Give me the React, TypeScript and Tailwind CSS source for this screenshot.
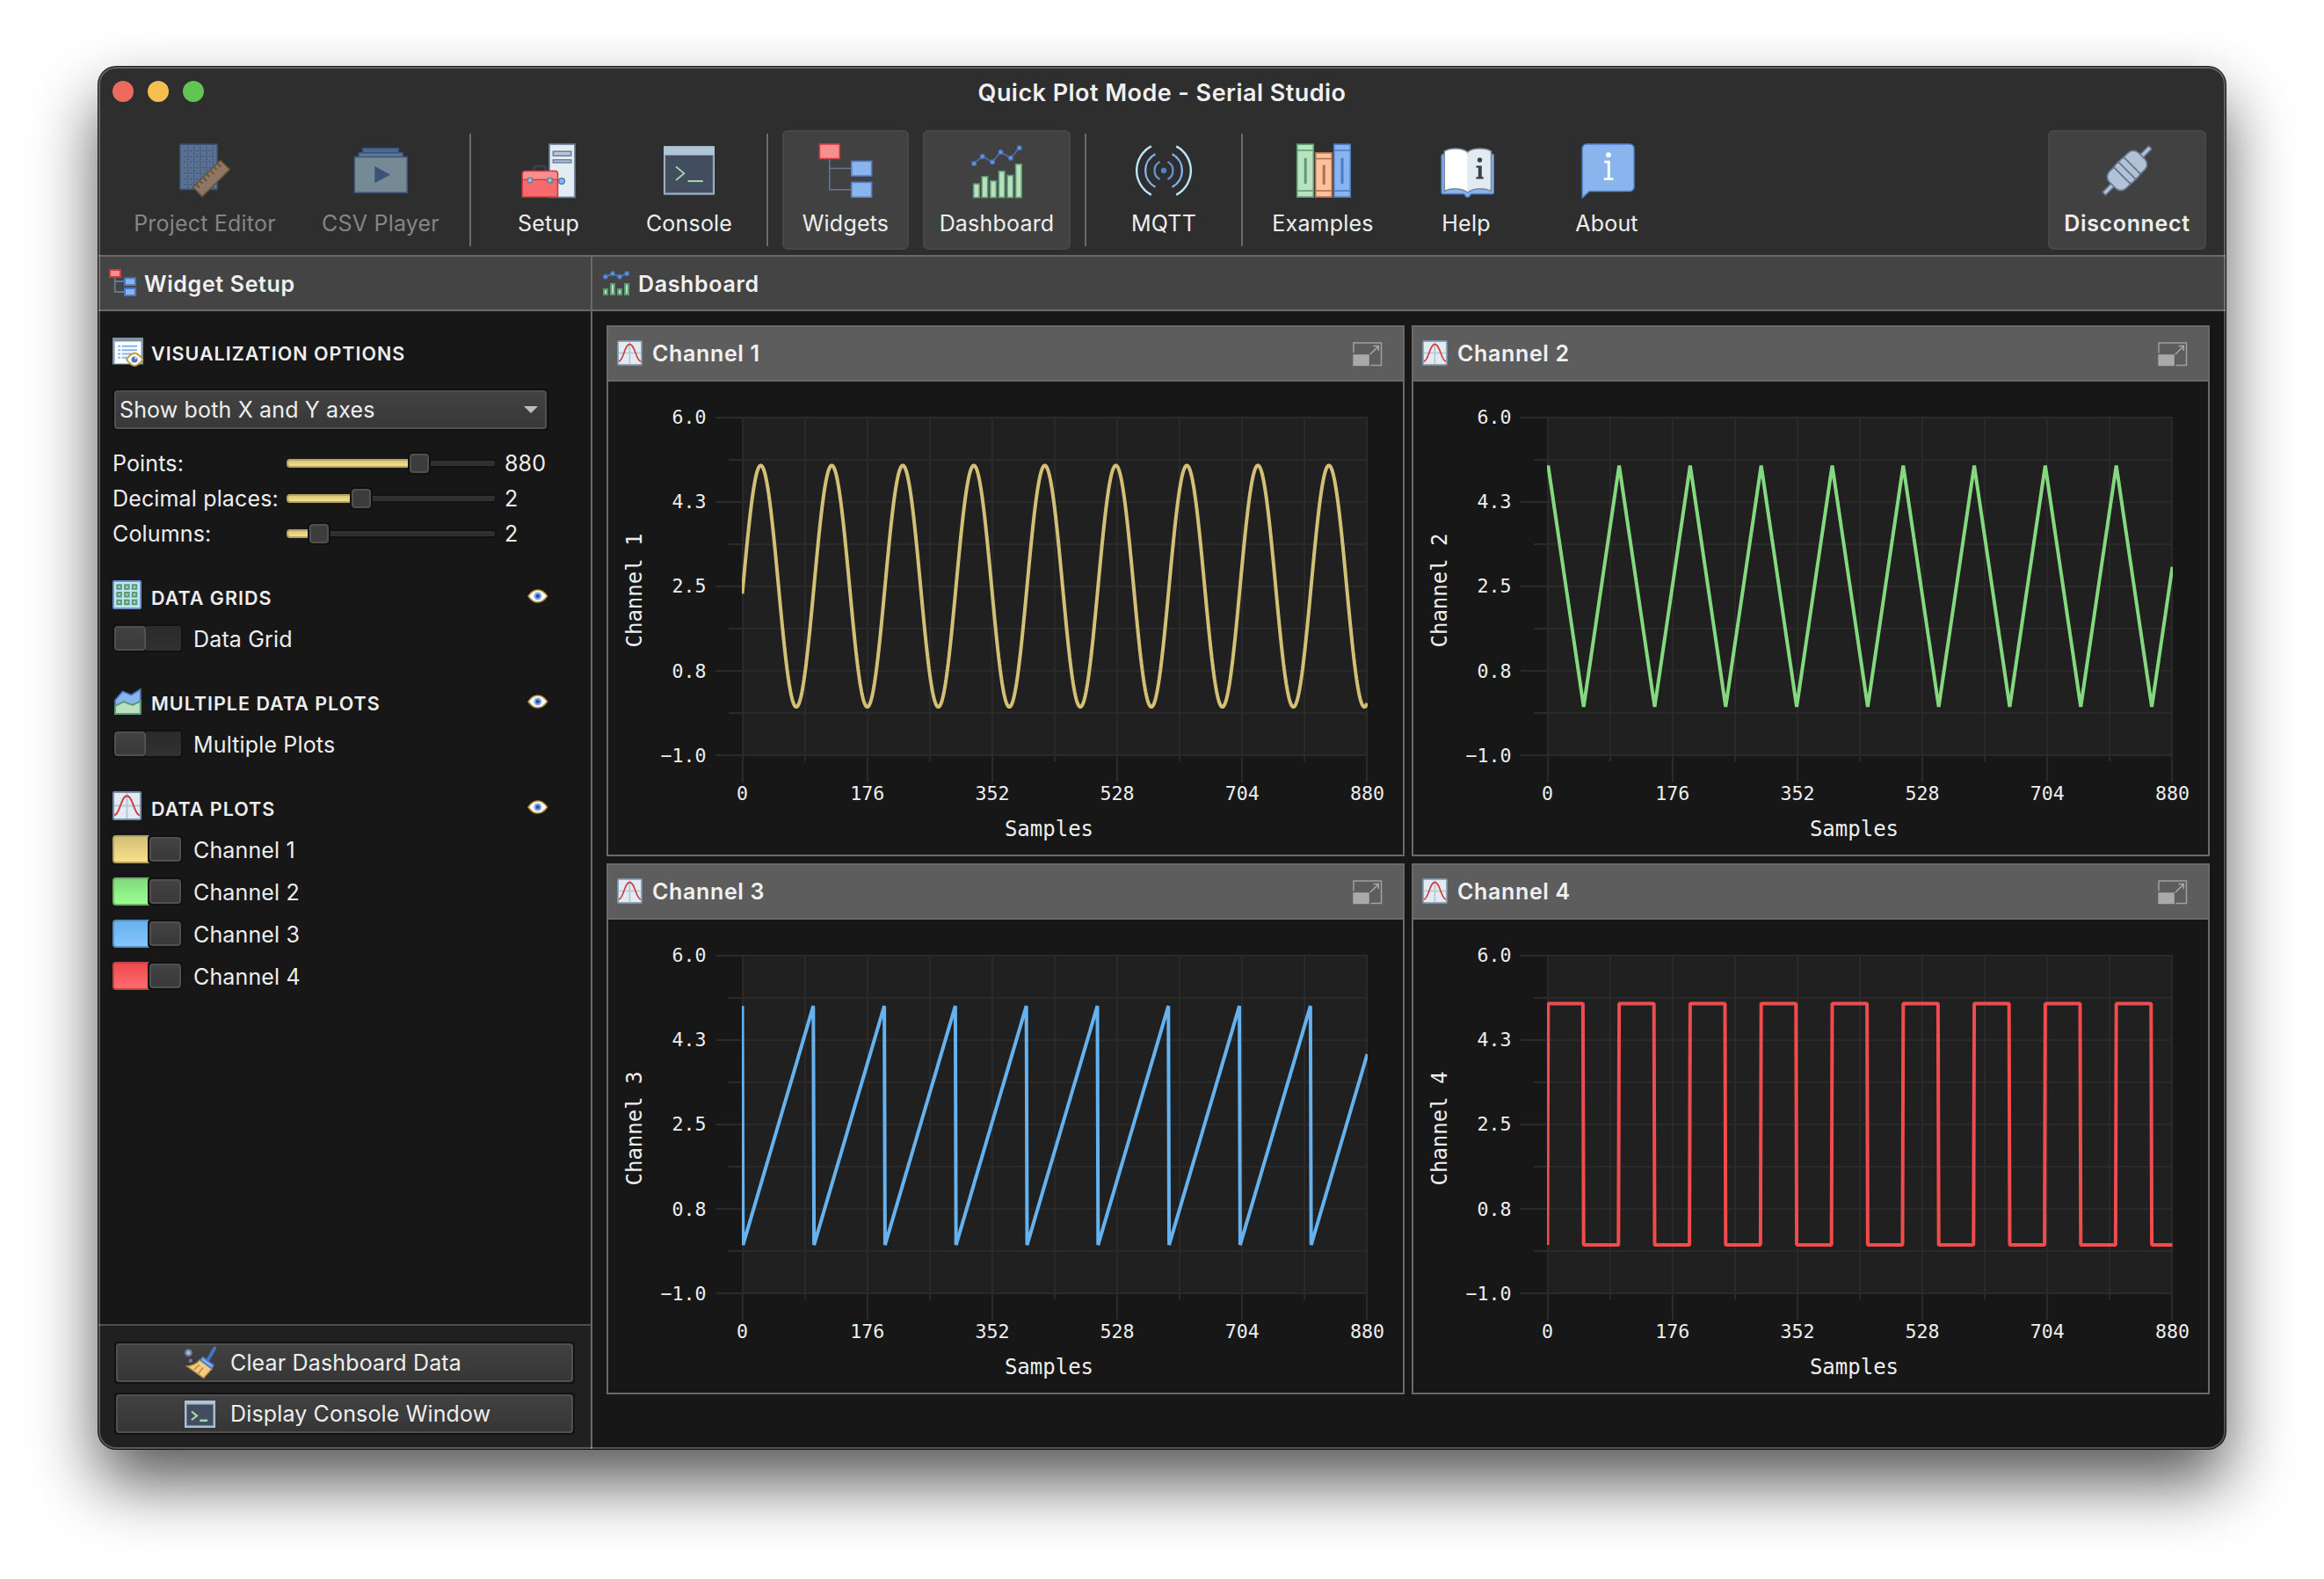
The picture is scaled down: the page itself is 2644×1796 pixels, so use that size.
import React from "react";

/* ---------- Toolbar icons (64 x 64) ---------- */

function Icon64({ children }: { children: React.ReactNode }) {
  return (
    <svg className="h-16 w-16 shrink-0" viewBox="0 0 64 64" fill="none">
      {children}
    </svg>
  );
}

function ProjectEditorIcon() {
  const cols = [8, 11.6, 15.2, 18.8, 22.4, 26, 29.6, 33.2, 36.8, 40.4];
  const rows = [5.5, 8.7, 11.9, 15.1, 18.3, 21.5, 24.7, 27.9, 31.1, 34.3, 37.5, 40.7, 43.9, 47.1, 50.3];
  return (
    <Icon64>
      <rect x="3.8" y="2.2" width="42.4" height="51.2" fill="#5a728f" stroke="#37517a" strokeWidth="1.6" />
      {rows.map((y, r) =>
        cols.map((x, c) =>
          r % 2 === 0 && c % 2 === 0 ? null : (
            <rect key={`${x}-${y}`} x={x} y={y} width="1.8" height="1.6" fill="#3e5782" />
          ),
        ),
      )}
      <path d="M49.7 20.3 60.4 30.7 29 61.6 18.6 50.8Z" fill="#8f7664" stroke="#62543b" strokeWidth="1.6" />
      <path
        d="M46.5 24 50.5 28M42.5 28l3 3M38.5 32l4 4M34.3 36l3 3M30.3 40l4 4M26.5 43.8l3 3M22.3 47.8l4 4"
        stroke="#5c4c33"
        strokeWidth="1.5"
      />
    </Icon64>
  );
}

function CsvPlayerIcon() {
  return (
    <Icon64>
      <rect x="11.7" y="6.6" width="40.6" height="6" fill="#4e6a8b" stroke="#37517a" strokeWidth="1.4" />
      <rect x="7" y="11.8" width="50.4" height="5" fill="#5f7896" stroke="#37517a" strokeWidth="1.4" />
      <rect x="2.3" y="16.5" width="60" height="40.6" fill="#768a95" stroke="#3c567c" strokeWidth="1.6" />
      <path d="M25.3 27 43 36.7 25.3 46.3Z" fill="#3b5377" />
    </Icon64>
  );
}

function SetupIcon() {
  return (
    <Icon64>
      <rect x="33" y="2" width="29" height="60.4" fill="#e2ecf2" stroke="#6c7f97" strokeWidth="1.7" />
      <rect x="37.3" y="10.2" width="20.4" height="5" fill="#b6c5da" stroke="#6c7f97" strokeWidth="1.5" />
      <rect x="37.3" y="19.8" width="20.4" height="3.2" fill="#b6c5da" stroke="#6c7f97" strokeWidth="1.5" />
      <circle cx="47" cy="44" r="3.4" fill="#86b2ec" stroke="#4a77bd" strokeWidth="1.3" />
      <path d="M15.6 32v-3.4a1.6 1.6 0 0 1 1.6-1.6h10a1.6 1.6 0 0 1 1.6 1.6V32" stroke="#36404e" strokeWidth="2.8" />
      <path d="M2.2 62V35.5a3 3 0 0 1 3-3h34.3a3 3 0 0 1 3 3V62Z" fill="#f66a6d" stroke="#c93a40" strokeWidth="1.6" />
      <path d="M3 41.8V35.8a2.4 2.4 0 0 1 2.4-2.4h33.9a2.4 2.4 0 0 1 2.4 2.4v6Z" fill="#f78f91" />
      <path d="M2.2 42.4h40.3" stroke="#c93a40" strokeWidth="1.3" />
      <rect x="8.6" y="40.6" width="4.8" height="5" fill="#b6c5da" stroke="#6c7f97" strokeWidth="1.5" />
      <rect x="31.2" y="40.6" width="4.8" height="5" fill="#b6c5da" stroke="#6c7f97" strokeWidth="1.5" />
    </Icon64>
  );
}

function ConsoleIcon() {
  return (
    <Icon64>
      <rect x="3" y="4" width="58" height="56" fill="#b0c5d8" />
      <path d="M3 4.6h58" stroke="#9fb6cc" strokeWidth="1.2" />
      <rect x="4.7" y="14.5" width="54.6" height="43" fill="#424e5d" stroke="#8398ae" strokeWidth="1" />
      <path d="M3 59.4h58" stroke="#66798e" strokeWidth="1.2" />
      <path d="M17 27.5 26.3 35.2 17 43" stroke="#a5d3ac" strokeWidth="1.8" />
      <path d="M30.5 44h17.3" stroke="#a5d3ac" strokeWidth="1.9" />
    </Icon64>
  );
}

function WidgetsIcon() {
  return (
    <Icon64>
      <path d="M13.8 19v34.7H38M13.8 29.5H38" stroke="#66788f" strokeWidth="1.5" />
      <rect x="2.4" y="1.9" width="22.8" height="16.6" fill="#f78f91" stroke="#cb3b42" strokeWidth="1.6" />
      <rect x="38.8" y="21.4" width="22.8" height="16.6" fill="#8ab4ee" stroke="#4f80c9" strokeWidth="1.6" />
      <rect x="38.8" y="45.4" width="22.8" height="16.8" fill="#8ab4ee" stroke="#4f80c9" strokeWidth="1.6" />
    </Icon64>
  );
}

function DashboardIcon() {
  const bars = [
    [4.8, 46.3],
    [14.3, 38],
    [24, 43],
    [33.6, 32],
    [43.2, 36.7],
    [52.8, 24],
  ];
  const pts = [
    [6.1, 24],
    [15.7, 16],
    [27, 22.3],
    [36.5, 11],
    [47.8, 17.7],
    [57.7, 6.3],
  ];
  return (
    <Icon64>
      {bars.map(([x, y]) => (
        <rect key={x} x={x + 0.8} y={y + 0.8} width="6.6" height={61.9 - y} fill="#b7e0bd" stroke="#5b9a74" strokeWidth="1.6" />
      ))}
      <polyline points={pts.map((p) => p.join(",")).join(" ")} stroke="#4a74b6" strokeWidth="1.5" />
      {pts.map(([x, y]) => (
        <circle key={x} cx={x} cy={y} r="2.3" fill="#6c9ae0" stroke="#4a77c0" strokeWidth="1.4" />
      ))}
    </Icon64>
  );
}

function MqttIcon() {
  return (
    <Icon64>
      <circle cx="32" cy="32" r="3.2" fill="#4f7fc8" />
      <path d="M27.6 22A11.3 11.3 0 0 0 27.6 42M36.4 22A11.3 11.3 0 0 1 36.4 42" stroke="#6690c9" strokeWidth="2.4" />
      <path d="M22.4 13.2A21.3 21.3 0 0 0 22.4 50.8M41.6 13.2A21.3 21.3 0 0 1 41.6 50.8" stroke="#85b1ee" strokeWidth="2.4" />
      <path d="M17.8 4.4A31.2 31.2 0 0 0 17.8 59.6M46.2 4.4A31.2 31.2 0 0 1 46.2 59.6" stroke="#bde6fb" strokeWidth="2.4" />
    </Icon64>
  );
}

function ExamplesIcon() {
  return (
    <Icon64>
      <rect x="2.7" y="2.1" width="18.6" height="60" fill="#b9e2bf" stroke="#5b9c76" strokeWidth="1.6" />
      <path d="M2.7 9h18.6M2.7 55h18.6" stroke="#5b9c76" strokeWidth="1.5" />
      <path d="M12.2 17.7V47" stroke="#5b9c76" strokeWidth="3" />
      <rect x="23.7" y="11.8" width="18.6" height="50.3" fill="#fdc19c" stroke="#a9704f" strokeWidth="1.6" />
      <path d="M23.7 18.4h18.6M23.7 55h18.6" stroke="#a9704f" strokeWidth="1.5" />
      <path d="M33.2 25.7V48" stroke="#a9704f" strokeWidth="3" />
      <rect x="44.7" y="2.1" width="18.6" height="60" fill="#8ab4ee" stroke="#4a7bc4" strokeWidth="1.6" />
      <path d="M44.7 9h18.6M44.7 55h18.6" stroke="#4a7bc4" strokeWidth="1.5" />
      <path d="M54 17.7V47" stroke="#4a7bc4" strokeWidth="3" />
    </Icon64>
  );
}

function HelpIcon() {
  return (
    <Icon64>
      <path
        d="M6 13.5h55.6a2 2 0 0 1 2 2v41a2 2 0 0 1-2 2H38c-.8 0-1.2.7-1.6 1.8-.8 2.6-4.8 2.6-5.6 0-.4-1.1-.8-1.8-1.6-1.8H6a2 2 0 0 1-2-2v-41a2 2 0 0 1 2-2Z"
        fill="#8ab4ee"
        stroke="#4f80c9"
        strokeWidth="1.4"
      />
      <path d="M33.8 11C28 6 14 5.5 7.3 10v45.5C14 51.5 27 51.5 33.8 57Z" fill="#ffffff" />
      <path d="M33.8 11C39 6 54 5.5 60.5 10v45.5C54 51.5 40 51.5 33.8 57Z" fill="#e1ebf1" />
      <path
        d="M33.8 11C28 6 14 5.5 7.3 10v45.5C14 51.5 27 51.5 33.8 57 40 51.5 54 51.5 60.5 55.5V10C54 5.5 39 6 33.8 11Z"
        stroke="#76889b"
        strokeWidth="1.5"
      />
      <circle cx="47.5" cy="20" r="2.7" fill="#37404c" />
      <path d="M43.5 26.5h6.3v12.8h2v2.3h-8.4v-2.3h2.4V28.8h-2.3Z" fill="#37404c" />
    </Icon64>
  );
}

function AboutIcon() {
  return (
    <Icon64>
      <path
        d="M9.2 2H58a5 5 0 0 1 5 5v43.5a5 5 0 0 1-5 5H12.3L4.2 62.8V7a5 5 0 0 1 5-5Z"
        fill="#8ab4ee"
        stroke="#5585cd"
        strokeWidth="1.5"
      />
      <circle cx="34" cy="14.2" r="2.9" fill="#ffffff" />
      <path d="M29.2 20.8h6.6v19.4h3.6v2.8H28.8v-2.8h4V23.4h-3.6Z" fill="#ffffff" />
    </Icon64>
  );
}

function DisconnectIcon() {
  return (
    <Icon64>
      <g transform="translate(32 32) rotate(-45)" stroke="#66788f" strokeWidth="1.6" fill="#b1c1d6">
        <rect x="-37" y="-2.4" width="18" height="4.8" />
        <rect x="19" y="-2.4" width="18" height="4.8" />
        <path d="M-8 -13.5H-15a8.5 8.5 0 0 0-8.5 8.5V5a8.5 8.5 0 0 0 8.5 8.5H-8Z" />
        <path d="M8 -13.5H15a8.5 8.5 0 0 1 8.5 8.5V5a8.5 8.5 0 0 1-8.5 8.5H8Z" />
        <path d="M0-14H-5a3 3 0 0 0-3 3V11a3 3 0 0 0 3 3H0Z" />
        <path d="M0-14H5a3 3 0 0 1 3 3V11a3 3 0 0 1-3 3H0Z" />
      </g>
    </Icon64>
  );
}

/* ---------- Small icons ---------- */

function WidgetsSmallIcon() {
  return (
    <svg className="h-8 w-8 shrink-0" viewBox="0 0 32 32" fill="none">
      <path d="M6.7 9.5V26H17M6.7 14H17" stroke="#66788f" strokeWidth="1.8" />
      <rect x="1" y="1" width="12" height="8" fill="#f78f91" stroke="#cb3b42" strokeWidth="2" />
      <rect x="18" y="10.3" width="12" height="8" fill="#8ab4ee" stroke="#4a77c0" strokeWidth="2" />
      <rect x="18" y="22" width="12" height="8" fill="#8ab4ee" stroke="#4a77c0" strokeWidth="2" />
    </svg>
  );
}

function DashboardSmallIcon() {
  const pts = [
    [2.9, 8.8],
    [11, 5.2],
    [19, 8.8],
    [27.2, 5.2],
  ];
  return (
    <svg className="h-8 w-8 shrink-0" viewBox="0 0 32 32" fill="none">
      {[
        [1, 23],
        [9, 17],
        [17, 23],
        [25, 17],
      ].map(([x, y]) => (
        <rect key={x} x={x} y={y} width="4" height={29 - y} fill="#b7e0bd" stroke="#5b9a74" strokeWidth="2" />
      ))}
      <polyline points={pts.map((p) => p.join(",")).join(" ")} stroke="#4a77c0" strokeWidth="1.8" />
      {pts.map(([x, y]) => (
        <circle key={x} cx={x} cy={y} r="2" fill="#8ab4ee" stroke="#4a77c0" strokeWidth="2" />
      ))}
    </svg>
  );
}

function OptionsIcon() {
  return (
    <svg className="h-[33px] w-9 shrink-0" viewBox="0 0 36 33" fill="none">
      <rect x="0" y="0" width="35" height="30.5" fill="#7f93a6" />
      <rect x="2.5" y="4.5" width="30" height="25" fill="#ffffff" />
      <path d="M10.6 9.8H28M10.6 14.2H28M10.6 18.6H22M10.6 22.8H19" stroke="#86b2ee" strokeWidth="2" />
      <path d="M6.2 9.8H9M6.2 14.2H9M6.2 18.6H9M6.2 22.8H9" stroke="#86b2ee" strokeWidth="2" />
      <path
        d="M16 25C19 20.5 22 17.8 25 17.8s6.5 3 9.5 7.2C31.5 29 28 32 25 32s-6-3-9-7Z"
        fill="#ffffff"
        stroke="#bc9a3f"
        strokeWidth="1.9"
      />
      <circle cx="25" cy="25" r="3.5" fill="#4a74bb" />
      <circle cx="26.4" cy="23.4" r="1.1" fill="#ffffff" />
    </svg>
  );
}

function GridIcon() {
  return (
    <svg className="h-[33px] w-[33px] shrink-0" viewBox="0 0 33 33" fill="none">
      <rect x="1" y="1" width="31" height="31" rx="1" fill="#c0e6f8" stroke="#6c93cc" strokeWidth="2" />
      {[7.6, 16.3, 25].map((x) =>
        [7.6, 16.3, 25].map((y) => (
          <rect key={`${x}-${y}`} x={x - 2.2} y={y - 2.2} width="4.4" height="4.4" fill="#b9e2bf" stroke="#5b9c76" strokeWidth="2.2" />
        )),
      )}
    </svg>
  );
}

function MultiPlotIcon() {
  return (
    <svg className="h-[33px] w-[33px] shrink-0" viewBox="0 0 33 33" fill="none">
      <path d="M3 30V16.5L11.5 6.5l9.8 4L31.8 4V30Z" fill="#8ab4ee" stroke="#4a77bd" strokeWidth="1.8" />
      <path d="M3 32V23l9.5-5 10.5 4 8.8-4.5V32Z" fill="#b9e2bf" stroke="#5b9c76" strokeWidth="2" />
    </svg>
  );
}

function PlotIcon({ className }: { className: string }) {
  return (
    <svg className={className} viewBox="0 0 33 33" fill="none" preserveAspectRatio="none">
      <rect x="1" y="1" width="31" height="31" rx="1" fill="#e1ebf1" stroke="#7890a5" strokeWidth="2" />
      <path d="M16.4 2V31M2 16.5H31" stroke="#b4c8d4" strokeWidth="1.9" />
      <path d="M2.3 27.5C9 25 9.5 5.3 16.4 5.3S24 25 30.7 27.5" stroke="#cf3d41" strokeWidth="1.9" />
    </svg>
  );
}

function EyeIcon() {
  return (
    <svg className="mt-0.5 h-4 w-6 shrink-0" viewBox="0 0 24 16" fill="none">
      <path
        d="M1 8C4 3.5 7.5 1 11.8 1S19.5 3.5 22.6 8C19.5 12.5 16 15 11.8 15S4 12.5 1 8Z"
        fill="#ffffff"
        stroke="#b3923f"
        strokeWidth="1.5"
      />
      <circle cx="11.8" cy="8" r="3.8" fill="#6d9ce4" stroke="#86aef0" strokeWidth="1.4" />
      <circle cx="11.8" cy="8" r="2" fill="#2f4d86" />
    </svg>
  );
}

function BroomIcon() {
  return (
    <svg className="h-[38px] w-9 shrink-0" viewBox="0 0 36 38" fill="none">
      <circle cx="4.4" cy="7.7" r="3.3" fill="#a9bdd6" stroke="#667f9f" strokeWidth="2.2" />
      <circle cx="6.9" cy="16.7" r="2.2" fill="#667f9f" />
      <path d="M2.6 23C9 22.5 14 20 17.5 15.5L31 26C27.5 30 24 33.5 21.7 36.5Z" fill="#f3cb7e" stroke="#b08a3c" strokeWidth="1.4" />
      <path d="M10.5 27 17 21.5M15.5 31.5 21 24.5" stroke="#b08a3c" strokeWidth="1.3" />
      <path d="M27 15 34.3 2.5" stroke="#4674bd" strokeWidth="4" strokeLinecap="round" />
      <path d="M20.5 12.5 33 21.8 31 25.5 18 16Z" fill="#8ab4ee" stroke="#4a77c0" strokeWidth="1.7" strokeLinejoin="round" />
    </svg>
  );
}

function ConsoleSmallIcon() {
  return (
    <svg className="h-[31px] w-9 shrink-0" viewBox="0 0 36 31" fill="none">
      <rect x="0" y="0" width="35" height="31" fill="#b0c5d8" />
      <rect x="2.2" y="4.3" width="30.6" height="24.4" fill="#424e5d" stroke="#7f95ab" strokeWidth="0.9" />
      <path d="M8 12.5 14 17.3 8 22" stroke="#a5d9ac" strokeWidth="2.2" />
      <path d="M17.3 22.8h8.7" stroke="#a5d9ac" strokeWidth="2.4" />
    </svg>
  );
}

function ExpandIcon() {
  return (
    <svg className="mt-0.5 h-7 w-[34px] shrink-0" viewBox="0 0 34 28" fill="none">
      <path d="M1 12.5V1H32.5V26.5H20.5" stroke="#a0a0a0" strokeWidth="1.5" />
      <rect x="0.3" y="14.2" width="18.5" height="13" fill="#a9a9a9" />
      <path d="M19.8 14 28.8 5.2M23.5 4.5H29.3V10" stroke="#a9a9a9" strokeWidth="1.5" />
    </svg>
  );
}

/* ---------- Toolbar ---------- */

function ToolButton({
  icon,
  label,
  width = "w-36",
  active = false,
  disabled = false,
  bold = false,
}: {
  icon: React.ReactNode;
  label: string;
  width?: string;
  active?: boolean;
  disabled?: boolean;
  bold?: boolean;
}) {
  return (
    <div
      className={`flex h-[136px] shrink-0 flex-col items-center rounded-md border-2 pt-3 ${width} ${
        active ? "border-[#474747] bg-[#414141]" : "border-transparent"
      }`}
    >
      {icon}
      <span
        className={`mt-3 whitespace-nowrap text-[25px] leading-8 ${
          bold ? "font-semibold tracking-[0.65px]" : "tracking-[0.2px]"
        } ${disabled ? "text-[#858585]" : "text-[#eeeeee]"}`}
      >
        {label}
      </span>
    </div>
  );
}

function ToolSeparator() {
  return <div className="h-32 w-0.5 shrink-0 bg-[#6a6a6a]" />;
}

function Toolbar() {
  return (
    <div className="flex h-[154px] items-center gap-4 border-b-2 border-[#6a6a6a] px-[22px] pt-1">
      <ToolButton icon={<ProjectEditorIcon />} label="Project Editor" width="w-[198px]" disabled />
      <ToolButton icon={<CsvPlayerIcon />} label="CSV Player" width="w-[170px]" disabled />
      <ToolSeparator />
      <ToolButton icon={<SetupIcon />} label="Setup" />
      <ToolButton icon={<ConsoleIcon />} label="Console" />
      <ToolSeparator />
      <ToolButton icon={<WidgetsIcon />} label="Widgets" active />
      <ToolButton icon={<DashboardIcon />} label="Dashboard" width="w-[168px]" active />
      <ToolSeparator />
      <ToolButton icon={<MqttIcon />} label="MQTT" />
      <ToolSeparator />
      <ToolButton icon={<ExamplesIcon />} label="Examples" width="w-[150px]" />
      <ToolButton icon={<HelpIcon />} label="Help" />
      <ToolButton icon={<AboutIcon />} label="About" />
      <div className="grow" />
      <ToolButton icon={<DisconnectIcon />} label="Disconnect" width="w-[180px]" active bold />
    </div>
  );
}

/* ---------- Sidebar ---------- */

function PaneHeader({ icon, title }: { icon: React.ReactNode; title: string }) {
  return (
    <div className="flex h-[62px] shrink-0 items-center gap-2 border-b-2 border-[#6a6a6a] bg-[#444444] pl-3">
      {icon}
      <span className="pt-px text-[25px] font-semibold leading-8 tracking-[0.65px] text-[#f0f0f0]">{title}</span>
    </div>
  );
}

function SliderRow({ label, value, fill }: { label: string; value: string; fill: number }) {
  return (
    <div className="flex h-10 items-center">
      <span className="w-[198px] shrink-0 whitespace-nowrap">{label}</span>
      <div className="relative flex h-10 w-[239px] items-center">
        <div className="h-2.5 w-full rounded border-2 border-[#121212] bg-[#303030]" />
        <div
          className="absolute left-0 h-2.5 rounded-l border-2 border-r-0 border-[#b3a464] bg-gradient-to-b from-[#d9c77b] to-[#f6e08a]"
          style={{ width: fill }}
        />
        <div className="absolute h-[26px] w-[26px] rounded border-2 border-[#111111] bg-[#111111]" style={{ left: fill }}>
          <div className="h-[22px] w-[22px] rounded-sm border-2 border-[#505050] bg-[#3c3c3c]" />
        </div>
      </div>
      <span className="ml-[9px]">{value}</span>
    </div>
  );
}

function GroupHeader({ icon, title, eye = true }: { icon: React.ReactNode; title: string; eye?: boolean }) {
  return (
    <div className="flex h-[33px] items-center">
      <div className="flex w-11 shrink-0">{icon}</div>
      <span className={`grow text-[21.5px] font-semibold leading-7 tracking-[1px] ${eye ? "pt-1.5" : "pt-0.5"}`}>{title}</span>
      {eye && <EyeIcon />}
    </div>
  );
}

function Knob() {
  return (
    <div className="h-8 w-10 shrink-0 rounded border-2 border-[#111111] bg-[#111111]">
      <div className="h-7 w-9 rounded-sm border-2 border-[#505050] bg-gradient-to-b from-[#424242] to-[#393939]" />
    </div>
  );
}

function SwitchRow({ label, on }: { label: string; on?: string }) {
  return (
    <div className="flex h-12 items-center">
      {on ? (
        <div className="flex w-20 shrink-0">
          <div className={`-mr-0.5 h-8 w-[42px] rounded-l border-2 border-r-0 ${on}`} />
          <Knob />
        </div>
      ) : (
        <div className="flex w-20 shrink-0">
          <Knob />
          <div className="-ml-0.5 h-8 w-[42px] rounded-r border-2 border-l-0 border-[#111111] bg-gradient-to-b from-[#2a2a2a] to-[#313131]" />
        </div>
      )}
      <span className="ml-3 pt-px">{label}</span>
    </div>
  );
}

function PushButton({ icon, label }: { icon: React.ReactNode; label: string }) {
  return (
    <div className="rounded border-2 border-[#121212]">
      <div className="flex h-11 items-center rounded-sm border-2 border-[#505050] bg-gradient-to-b from-[#414141] to-[#363636] pl-[76px]">
        <div className="flex w-[52px] shrink-0">{icon}</div>
        <span className="whitespace-nowrap">{label}</span>
      </div>
    </div>
  );
}

function Sidebar() {
  return (
    <div className="flex w-[562px] shrink-0 flex-col border-r-2 border-[#6a6a6a] text-[25px] leading-8 tracking-[0.15px] text-[#eeeeee]">
      <PaneHeader icon={<WidgetsSmallIcon />} title="Widget Setup" />
      <div className="flex grow flex-col pl-4 pr-12 pt-[30px]">
        <GroupHeader icon={<OptionsIcon />} title="VISUALIZATION OPTIONS" eye={false} />
        <div className="mt-[25px] rounded border-2 border-[#101010]">
          <div className="flex h-11 items-center justify-between rounded-sm border-2 border-[#505050] bg-gradient-to-b from-[#424242] to-[#383838] pl-1 pr-2">
            <span>Show both X and Y axes</span>
            <svg className="h-2 w-4" viewBox="0 0 16 8">
              <path d="M0 0H16L8 8Z" fill="#bdbdbd" />
            </svg>
          </div>
        </div>
        <div className="mt-[17px]">
          <SliderRow label="Points:" value="880" fill={138} />
          <SliderRow label="Decimal places:" value="2" fill={72} />
          <SliderRow label="Columns:" value="2" fill={24} />
        </div>
        <div className="mt-[33px] flex flex-col gap-[9px]">
          <GroupHeader icon={<GridIcon />} title="DATA GRIDS" />
          <SwitchRow label="Data Grid" />
        </div>
        <div className="mt-[30px] flex flex-col gap-[9px]">
          <GroupHeader icon={<MultiPlotIcon />} title="MULTIPLE DATA PLOTS" />
          <SwitchRow label="Multiple Plots" />
        </div>
        <div className="mt-[30px] flex flex-col gap-[9px]">
          <GroupHeader icon={<PlotIcon className="h-[33px] w-[33px]" />} title="DATA PLOTS" />
          <div>
            <SwitchRow label="Channel 1" on="border-[#b3a464] bg-gradient-to-b from-[#d3c076] to-[#f8e08a]" />
            <SwitchRow label="Channel 2" on="border-[#6cb267] bg-gradient-to-b from-[#82da7c] to-[#9bff92]" />
            <SwitchRow label="Channel 3" on="border-[#5490c4] bg-gradient-to-b from-[#66b1ee] to-[#85c6ff]" />
            <SwitchRow label="Channel 4" on="border-[#c44448] bg-gradient-to-b from-[#ee4a4c] to-[#ff6c6e]" />
          </div>
        </div>
      </div>
      <div className="flex h-[142px] flex-col gap-2.5 border-t-2 border-[#4c4c4c] bg-[#202020] px-[18px] pt-[18px]">
        <PushButton icon={<BroomIcon />} label="Clear Dashboard Data" />
        <PushButton icon={<ConsoleSmallIcon />} label="Display Console Window" />
      </div>
    </div>
  );
}

/* ---------- Plots ---------- */

const SAMPLES = 880;
const PLOT = { left: 152.5, right: 863.5, top: 40.5, bottom: 425 };

const phase = (t: number) => ((t % 100) + 100) % 100;

const waves: Record<string, (t: number) => number> = {
  sine: (t) => 2.5 + 2.5 * Math.sin((2 * Math.PI * t) / 100),
  triangle: (t) => 5 * Math.abs(1 - phase(t) / 50),
  saw: (t) => phase(t) / 20,
  square: (t) => (phase(t) < 50 ? 5 : 0),
};

function wavePoints(wave: string) {
  const pts: string[] = [];
  for (let k = 0; k <= SAMPLES; k++) {
    const x = PLOT.left + ((PLOT.right - PLOT.left) * k) / SAMPLES;
    const y = PLOT.top + ((6 - waves[wave](k - 1)) / 7) * (PLOT.bottom - PLOT.top);
    pts.push(`${x.toFixed(2)},${y.toFixed(2)}`);
  }
  return pts.join(" ");
}

function Plot({ title, wave, color }: { title: string; wave: string; color: string }) {
  const clip = `clip-${wave}`;
  return (
    <svg className="block h-[538px] w-[904px]" viewBox="0 0 904 538" fontFamily='"DejaVu Sans Mono", monospace' fill="#eeeeee">
      <clipPath id={clip}>
        <rect x="152" y="40" width="712" height="386" />
      </clipPath>
      <rect x="152" y="40" width="712" height="386" fill="#202020" />
      <g stroke="#2a2a2a" strokeWidth="2">
        {Array.from({ length: 9 }, (_, i) => (
          <path key={`h${i}`} d={`M${i % 2 ? 137 : 122} ${41 + i * 48}H864`} />
        ))}
        {Array.from({ length: 11 }, (_, i) => (
          <path key={`v${i}`} d={`M${153 + i * 71} 40V${i % 2 ? 432 : 456}`} />
        ))}
      </g>
      <polyline
        points={wavePoints(wave)}
        fill="none"
        stroke={color}
        strokeWidth="4"
        strokeLinejoin="bevel"
        clipPath={`url(#${clip})`}
      />
      {["6.0", "4.3", "2.5", "0.8", "−1.0"].map((t, i) => (
        <text key={t} x="111.5" y={47.5 + i * 96.4} textAnchor="end" fontSize="21.6">
          {t}
        </text>
      ))}
      {["0", "176", "352", "528", "704", "880"].map((t, i) => (
        <text key={t} x={152.5 + i * 142.2} y="476" textAnchor="middle" fontSize="21.6">
          {t}
        </text>
      ))}
      <text x="501.5" y="516.5" textAnchor="middle" fontSize="24">
        Samples
      </text>
      <text transform="translate(38 237.5) rotate(-90)" textAnchor="middle" fontSize="24">
        {title}
      </text>
    </svg>
  );
}

function PlotPanel({ title, wave, color }: { title: string; wave: string; color: string }) {
  return (
    <div className="h-[604px] w-[908px] border-2 border-[#6a6a6a] bg-[#171717]">
      <div className="flex h-[62px] items-center border-b-2 border-[#6a6a6a] bg-[#5d5d5d] pl-2.5 pr-[23px]">
        <PlotIcon className="mb-0.5 h-[29px] w-[29px]" />
        <span className="ml-[11px] grow text-[25px] font-semibold leading-8 tracking-[0.65px] text-[#f0f0f0]">{title}</span>
        <ExpandIcon />
      </div>
      <Plot title={title} wave={wave} color={color} />
    </div>
  );
}

/* ---------- Window ---------- */

export default function App() {
  return (
    <div className="flex h-[1796px] w-[2644px] items-start overflow-hidden bg-white font-['Inter',sans-serif]">
      <div className="relative ml-28 mt-[76px] flex h-[1572px] w-[2420px] flex-col overflow-hidden rounded-[20px] bg-[#171717] shadow-[0_0_0_1px_rgba(0,0,0,0.9),0_38px_74px_rgba(0,0,0,0.66)]">
        <div className="shrink-0 bg-[#2e2e2e]">
          <div className="grid h-[62px] grid-cols-3 items-center">
            <div className="flex gap-4 pb-1.5 pl-4">
              <div className="h-6 w-6 rounded-full bg-[#ed6a5e]" />
              <div className="h-6 w-6 rounded-full bg-[#f5bf4f]" />
              <div className="h-6 w-6 rounded-full bg-[#61c554]" />
            </div>
            <span className="whitespace-nowrap pb-0.5 text-center text-[27px] font-semibold leading-8 tracking-[0.45px] text-[#f0f0f0]">
              Quick Plot Mode - Serial Studio
            </span>
          </div>
          <Toolbar />
        </div>
        <div className="flex grow">
          <Sidebar />
          <div className="flex grow flex-col">
            <PaneHeader icon={<DashboardSmallIcon />} title="Dashboard" />
            <div className="grid grid-cols-[908px_908px] gap-2 pl-4 pt-4">
              <PlotPanel title="Channel 1" wave="sine" color="#d3c076" />
              <PlotPanel title="Channel 2" wave="triangle" color="#84d97e" />
              <PlotPanel title="Channel 3" wave="saw" color="#66b2ef" />
              <PlotPanel title="Channel 4" wave="square" color="#f04b4d" />
            </div>
          </div>
        </div>
        <div className="pointer-events-none absolute inset-0 rounded-[20px] border-2 border-white/25" />
      </div>
    </div>
  );
}
